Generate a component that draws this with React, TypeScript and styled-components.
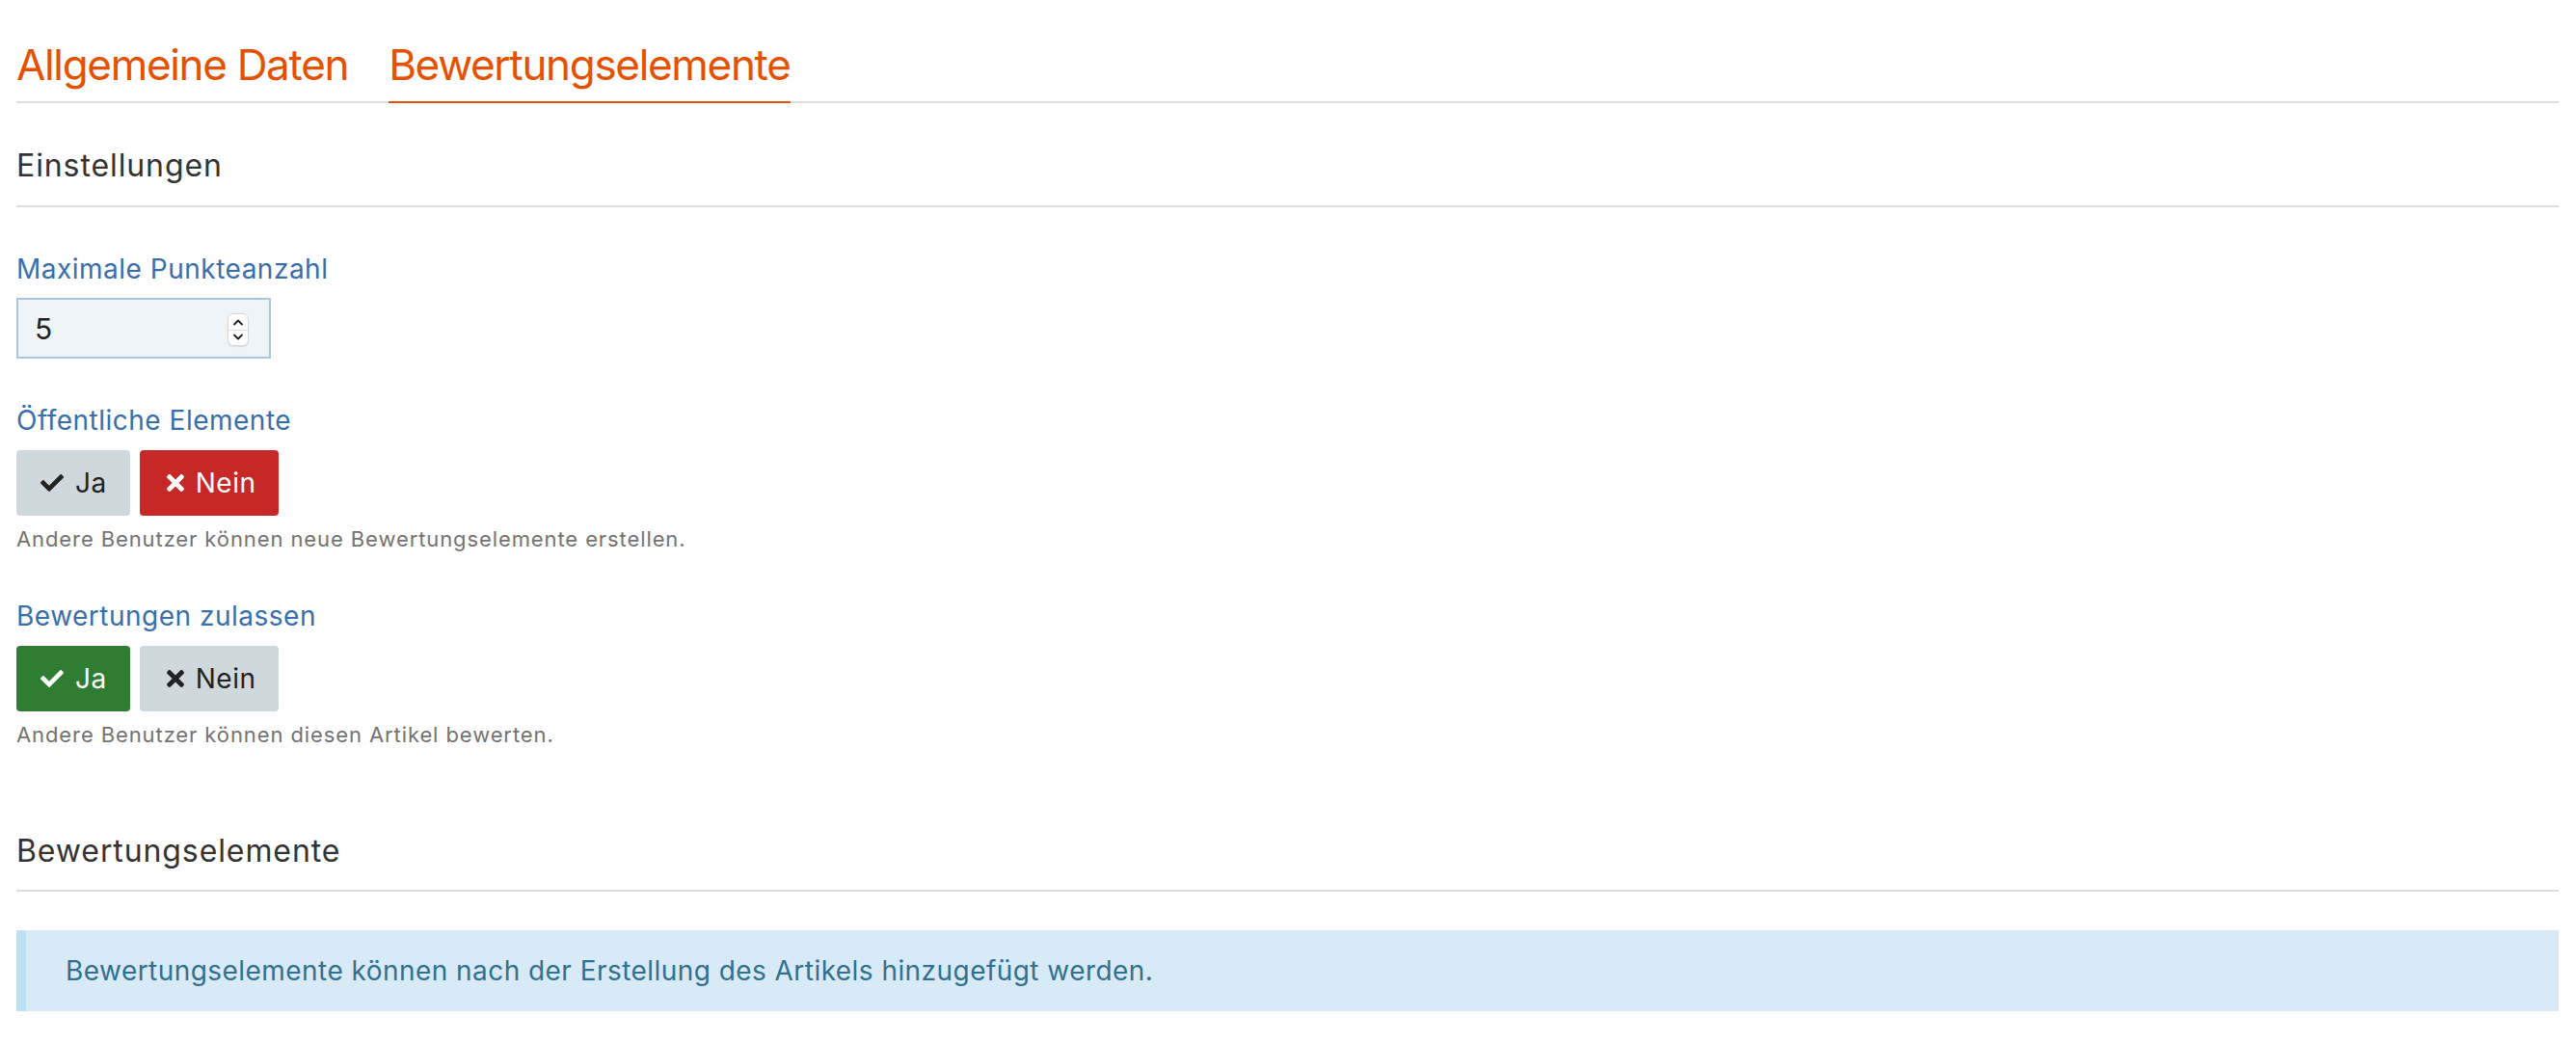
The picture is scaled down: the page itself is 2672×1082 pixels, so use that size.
import React, { useState } from "react";
import styled, { createGlobalStyle } from "styled-components";
import { FaCheck, FaTimes } from "react-icons/fa";

const GlobalStyle = createGlobalStyle`
    html, body {
        margin: 0;
        padding: 0;
        background: #ffffff;
    }

    body {
        font-family: Inter, "Liberation Sans", sans-serif;
        color: #333333;
    }

    * {
        box-sizing: border-box;
    }
`;

type Tone = "neutral" | "danger" | "success";

const toneColors: Record<Tone, { bg: string, fg: string }> = {
    neutral: { bg: "#cfd8dc", fg: "#222222" },
    danger: { bg: "#c62828", fg: "#ffffff" },
    success: { bg: "#2e7d32", fg: "#ffffff" },
};

export default function App() {
    const [maxPoints, setMaxPoints] = useState(5);
    const [isPublic, setIsPublic] = useState(false);
    const [allowRatings, setAllowRatings] = useState(true);

    return <Page>
        <GlobalStyle />
        <Tabs>
            <Tab>Allgemeine Daten</Tab>
            <Tab $active>Bewertungselemente</Tab>
        </Tabs>

        <SectionTitle>Einstellungen</SectionTitle>

        <Field>
            <Label>Maximale Punkteanzahl</Label>
            <NumberBox>
                <NumberInput
                    type="number"
                    value={maxPoints}
                    onChange={(event) => setMaxPoints(Number(event.target.value))}
                />
                <Stepper>
                    <StepButton onClick={() => setMaxPoints(maxPoints + 1)}>
                        <svg width="12" height="8" viewBox="0 0 12 8">
                            <path d="M2 6.5 L6 2.5 L10 6.5" fill="none" stroke="#1f1f1f" strokeWidth="1.8" strokeLinecap="round" strokeLinejoin="round" />
                        </svg>
                    </StepButton>
                    <StepButton $lower onClick={() => setMaxPoints(maxPoints - 1)}>
                        <svg width="12" height="8" viewBox="0 0 12 8">
                            <path d="M2 1.5 L6 5.5 L10 1.5" fill="none" stroke="#1f1f1f" strokeWidth="1.8" strokeLinecap="round" strokeLinejoin="round" />
                        </svg>
                    </StepButton>
                </Stepper>
            </NumberBox>
        </Field>

        <Field>
            <Label>Öffentliche Elemente</Label>
            <Toggle>
                <ToggleButton $tone={isPublic ? "success" : "neutral"} onClick={() => setIsPublic(true)}>
                    <CheckIcon><FaCheck /></CheckIcon>Ja
                </ToggleButton>
                <ToggleButton $tone={isPublic ? "neutral" : "danger"} onClick={() => setIsPublic(false)}>
                    <TimesIcon><FaTimes /></TimesIcon>Nein
                </ToggleButton>
            </Toggle>
            <Help>Andere Benutzer können neue Bewertungselemente erstellen.</Help>
        </Field>

        <Field>
            <Label>Bewertungen zulassen</Label>
            <Toggle>
                <ToggleButton $tone={allowRatings ? "success" : "neutral"} onClick={() => setAllowRatings(true)}>
                    <CheckIcon><FaCheck /></CheckIcon>Ja
                </ToggleButton>
                <ToggleButton $tone={allowRatings ? "neutral" : "danger"} onClick={() => setAllowRatings(false)}>
                    <TimesIcon><FaTimes /></TimesIcon>Nein
                </ToggleButton>
            </Toggle>
            <Help>Andere Benutzer können diesen Artikel bewerten.</Help>
        </Field>

        <SectionTitle $spaced>Bewertungselemente</SectionTitle>

        <InfoAlert>
            Bewertungselemente können nach der Erstellung des Artikels hinzugefügt werden.
        </InfoAlert>
    </Page>
}

const Page = styled.div`
    display: flex;
    flex-direction: column;
    align-items: stretch;
    padding: 41px 18px 0 17px;
    width: 100%;
`;

const Tabs = styled.div`
    display: flex;
    gap: 42px;
    border-bottom: 2px solid #dedede;
`;

const Tab = styled.div<{ $active?: boolean }>`
    font-size: 44px;
    line-height: 52px;
    letter-spacing: -0.03em;
    color: #e65100;
    padding-bottom: 12px;
    margin-bottom: -2px;
    border-bottom: 2px solid ${(p) => p.$active ? "#e65100" : "transparent"};
    cursor: pointer;
`;

const SectionTitle = styled.h2<{ $spaced?: boolean }>`
    margin: ${(p) => p.$spaced ? "85px" : "45px"} 0 0;
    padding-bottom: ${(p) => p.$spaced ? "20px" : "21px"};
    font-size: 32px;
    line-height: 40px;
    letter-spacing: 0.9px;
    font-weight: 400;
    color: #333333;
    border-bottom: 2px solid #dedede;
`;

const Field = styled.div`
    display: flex;
    flex-direction: column;
    align-items: flex-start;
    margin-top: 46px;
`;

const Label = styled.label`
    font-size: 28px;
    line-height: 36px;
    letter-spacing: 0.5px;
    color: #386eab;
    margin-bottom: 12px;
`;

const NumberBox = styled.div`
    position: relative;
    width: 264px;
    height: 63px;
`;

const NumberInput = styled.input`
    width: 100%;
    height: 100%;
    padding: 0 50px 0 17px;
    border: 2px solid #abc6e0;
    border-radius: 0;
    background: #eff4f9;
    font-family: Inter, "Liberation Sans", sans-serif;
    font-size: 30px;
    color: #222222;
    outline: none;
    appearance: textfield;
    -moz-appearance: textfield;

    &::-webkit-inner-spin-button,
    &::-webkit-outer-spin-button {
        -webkit-appearance: none;
        margin: 0;
    }
`;

const Stepper = styled.div`
    position: absolute;
    top: 16px;
    left: 219px;
    width: 22px;
    height: 34px;
    display: flex;
    flex-direction: column;
    background: #ffffff;
    border: 1px solid #d6d6d6;
    border-radius: 6px;
    box-shadow: 0 1px 1px rgba(0, 0, 0, 0.08);
    overflow: hidden;
`;

const StepButton = styled.button<{ $lower?: boolean }>`
    flex: 1;
    display: flex;
    align-items: center;
    justify-content: center;
    padding: 0;
    border: none;
    border-top: ${(p) => p.$lower ? "1px solid #e2e2e2" : "none"};
    background: transparent;
    cursor: pointer;
`;

const Toggle = styled.div`
    display: flex;
    gap: 10px;
    margin-top: 1px;
`;

const ToggleButton = styled.button<{ $tone: Tone }>`
    display: flex;
    align-items: center;
    gap: 12px;
    height: 68px;
    padding: 0 24px 0 25px;
    border: none;
    border-radius: 4px;
    background: ${(p) => toneColors[p.$tone].bg};
    color: ${(p) => toneColors[p.$tone].fg};
    font-family: Inter, "Liberation Sans", sans-serif;
    font-size: 28px;
    letter-spacing: 0.5px;
    cursor: pointer;
`;

const CheckIcon = styled.span`
    display: flex;

    svg {
        width: 24px;
        height: 24px;
    }
`;

const TimesIcon = styled.span`
    display: flex;
    padding-left: 3px;

    svg {
        width: 18px;
        height: 26px;
    }
`;

const Help = styled.div`
    margin: 10px 0 2px;
    font-size: 22px;
    line-height: 28px;
    letter-spacing: 0.9px;
    color: #737373;
`;

const InfoAlert = styled.div`
    margin-top: 40px;
    padding: 24px 24px 24px 41px;
    background: #d9eaf7;
    border-left: 10px solid #bde0f2;
    color: #31708f;
    font-size: 28px;
    line-height: 36px;
    letter-spacing: 0.45px;
`;
